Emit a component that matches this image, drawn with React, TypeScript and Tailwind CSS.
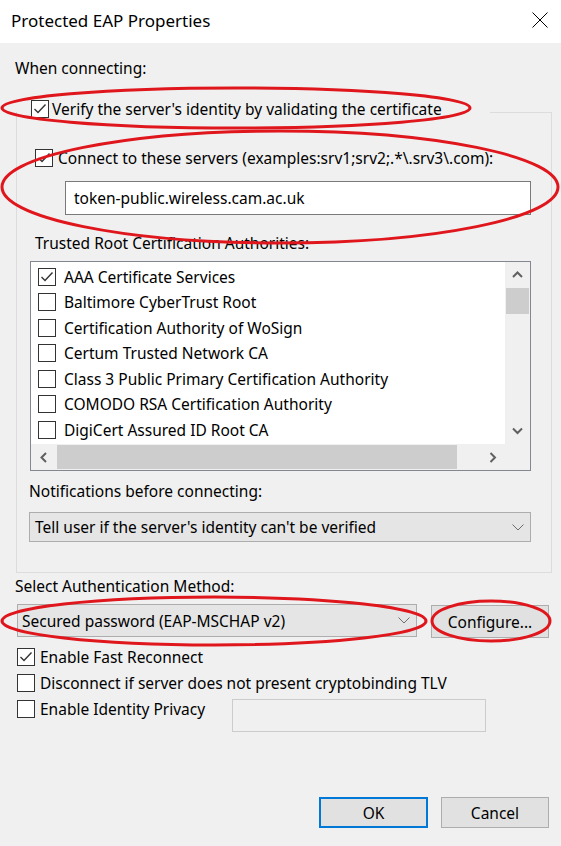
import React from "react";

const Check = ({ checked }: { checked?: boolean }) => (
  <span className="w-[18px] h-[18px] border border-[#333333] bg-white flex items-center justify-center shrink-0">
    {checked && (
      <svg width="14" height="12" viewBox="0 0 14 12">
        <path d="M1.5 6 L5 9.5 L12.5 1.5" fill="none" stroke="#333333" strokeWidth="1.4" />
      </svg>
    )}
  </span>
);

const Chevron = () => (
  <svg width="12" height="7" viewBox="0 0 12 7">
    <path d="M0.5 0.5 L6 6 L11.5 0.5" fill="none" stroke="#6d6d6d" strokeWidth="1" />
  </svg>
);

const Arrow = ({ dir }: { dir: "up" | "down" | "left" | "right" }) => {
  const d =
    dir === "up"
      ? "M1 7 L5.5 2.5 L10 7"
      : dir === "down"
      ? "M1 2.5 L5.5 7 L10 2.5"
      : dir === "left"
      ? "M7 1 L2.5 5.5 L7 10"
      : "M2.5 1 L7 5.5 L2.5 10";
  const w = dir === "up" || dir === "down" ? 11 : 10;
  const h = dir === "up" || dir === "down" ? 10 : 11;
  return (
    <svg width={w} height={h} viewBox={`0 0 ${w} ${h}`}>
      <path d={d} fill="none" stroke="#606060" strokeWidth="2" />
    </svg>
  );
};

const certs = [
  { name: "AAA Certificate Services", checked: true },
  { name: "Baltimore CyberTrust Root" },
  { name: "Certification Authority of WoSign" },
  { name: "Certum Trusted Network CA" },
  { name: "Class 3 Public Primary Certification Authority" },
  { name: "COMODO RSA Certification Authority" },
  { name: "DigiCert Assured ID Root CA" },
];

export default function App() {
  return (
    <div
      className="relative w-[561px] h-[846px] bg-[#f0f0f0] overflow-hidden text-black text-[15.5px] leading-[20px] flex flex-col"
      style={{ fontFamily: '"Noto Sans", "Liberation Sans", sans-serif' }}
    >
      {/* Title bar */}
      <div className="h-[43px] bg-white flex items-center justify-between pl-[11px] pr-[13px] shrink-0">
        <span className="text-[17px] leading-[24px] -mt-[1px]">Protected EAP Properties</span>
        <svg width="16" height="16" viewBox="0 0 16 16" className="-mt-[3px]">
          <path d="M0.5 0.5 L15.5 15.5 M15.5 0.5 L0.5 15.5" stroke="#000" strokeWidth="1" fill="none" />
        </svg>
      </div>

      <div className="flex flex-col pl-[15px]">
        <div className="mt-[15px]">When connecting:</div>

        {/* Group box */}
        <div className="mt-[34px] ml-[1px] w-[536px] border border-[#dcdcdc] flex flex-col pb-[30px]">
          <div className="-mt-[15px] h-[21px] w-[473px] bg-[#f0f0f0] flex items-center pl-[14px] gap-[3px]">
            <Check checked />
            <span>Verify the server's identity by validating the certificate</span>
          </div>

          <div className="mt-[28px] h-[21px] flex items-center pl-[18px] gap-[5px] whitespace-nowrap">
            <Check checked />
            <span>Connect to these servers (examples:srv1;srv2;.*\.srv3\.com):</span>
          </div>

          <div className="mt-[13px] ml-[48px] w-[466px] h-[34px] bg-white border border-[#7a7a7a] flex items-center pl-[8px]">
            token-public.wireless.cam.ac.uk
          </div>

          <div className="mt-[18px] ml-[18px]">Trusted Root Certification Authorities:</div>

          {/* List box */}
          <div className="mt-[8px] ml-[13px] w-[501px] h-[210px] border border-[#828790] bg-white grid grid-cols-[474px_25px] grid-rows-[182px_26px]">
            <div className="flex flex-col pt-[2px] overflow-hidden">
              {certs.map((c) => (
                <div key={c.name} className="h-[25.5px] flex items-center pl-[7px] gap-[8px] shrink-0 whitespace-nowrap">
                  <Check checked={c.checked} />
                  <span>{c.name}</span>
                </div>
              ))}
            </div>
            <div className="bg-[#f0f0f0] flex flex-col">
              <div className="h-[26px] flex items-center justify-center">
                <Arrow dir="up" />
              </div>
              <div className="h-[26px] mx-[1px] bg-[#cdcdcd]" />
              <div className="flex-1" />
              <div className="h-[26px] flex items-center justify-center">
                <Arrow dir="down" />
              </div>
            </div>
            <div className="bg-[#f0f0f0] flex">
              <div className="w-[26px] flex items-center justify-center">
                <Arrow dir="left" />
              </div>
              <div className="w-[400px] my-[1px] bg-[#cdcdcd]" />
              <div className="flex-1" />
              <div className="w-[25px] flex items-center justify-center">
                <Arrow dir="right" />
              </div>
            </div>
            <div className="bg-[#f0f0f0]" />
          </div>

          <div className="mt-[10px] ml-[12px]">Notifications before connecting:</div>

          <div className="mt-[11px] ml-[12px] w-[502px] h-[30px] bg-[#e5e5e5] border border-[#adadad] flex items-center justify-between pl-[5px] pr-[6px]">
            <span>Tell user if the server's identity can't be verified</span>
            <Chevron />
          </div>
        </div>

        <div className="mt-[3px]">Select Authentication Method:</div>

        <div className="mt-[8px] flex items-start">
          <div className="ml-[2px] w-[400px] h-[33px] bg-[#e5e5e5] border border-[#adadad] flex items-center justify-between pl-[4px] pr-[6px]">
            <span>Secured password (EAP-MSCHAP v2)</span>
            <Chevron />
          </div>
          <div className="ml-[14px] mt-[1px] w-[118px] h-[33px] bg-[#e1e1e1] border border-[#adadad] flex items-center justify-center">
            Configure...
          </div>
        </div>

        <div className="mt-[6px] h-[26px] flex items-center pl-[2px] gap-[5px]">
          <Check checked />
          <span>Enable Fast Reconnect</span>
        </div>
        <div className="h-[26px] flex items-center pl-[2px] gap-[5px]">
          <Check />
          <span>Disconnect if server does not present cryptobinding TLV</span>
        </div>
        <div className="flex items-start">
          <div className="w-[217px] h-[26px] flex items-center pl-[2px] gap-[5px]">
            <Check />
            <span>Enable Identity Privacy</span>
          </div>
          <div className="mt-[3px] w-[254px] h-[33px] bg-[#f0f0f0] border border-[#cccccc]" />
        </div>

        <div className="mt-[65px] flex justify-end pr-[12px] gap-[13px]">
          <div className="w-[109px] h-[31px] bg-[#e1e1e1] border-2 border-[#0078d7] flex items-center justify-center">
            OK
          </div>
          <div className="w-[108px] h-[31px] bg-[#e1e1e1] border border-[#adadad] flex items-center justify-center">
            Cancel
          </div>
        </div>
      </div>

      {/* Red annotation ellipses */}
      <svg className="absolute left-0 top-0 pointer-events-none" width="561" height="846" viewBox="0 0 561 846">
        <g fill="none" stroke="#e0161d" strokeWidth="3">
          <ellipse cx="236" cy="108" rx="234" ry="20" />
          <ellipse cx="280" cy="187" rx="278" ry="56" />
          <ellipse cx="214" cy="621" rx="212" ry="24" />
          <ellipse cx="491" cy="621" rx="59" ry="20" />
        </g>
      </svg>
    </div>
  );
}
